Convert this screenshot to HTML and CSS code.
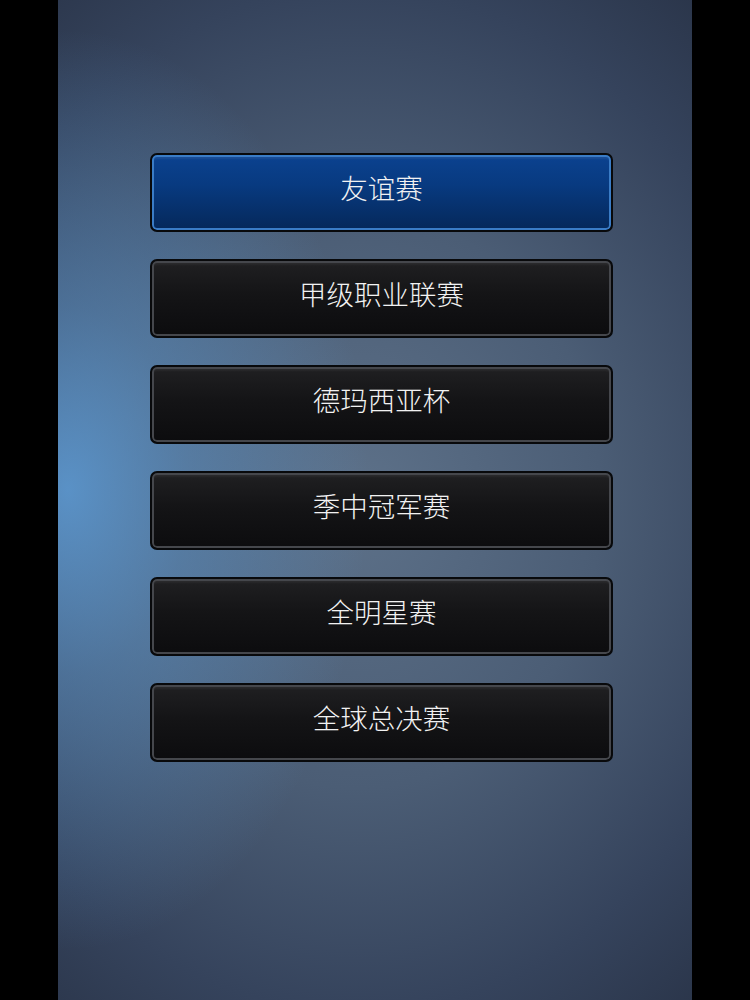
FILE: index.html
```html
<!DOCTYPE html>
<html lang="zh">
<head>
<meta charset="utf-8">
<link rel="stylesheet" href="styles.css">
</head>
<body>
<div class="screen">
  <div class="panel">
    <div class="menu">
      <div class="btn active"><span>友谊赛</span></div>
      <div class="btn"><span>甲级职业联赛</span></div>
      <div class="btn"><span>德玛西亚杯</span></div>
      <div class="btn"><span>季中冠军赛</span></div>
      <div class="btn"><span>全明星赛</span></div>
      <div class="btn"><span>全球总决赛</span></div>
    </div>
  </div>
</div>
</body>
</html>
```
FILE: styles.css
```css
html, body {
  margin: 0;
  padding: 0;
  background: #000;
}
.screen {
  width: 750px;
  height: 1000px;
  background: #000;
  display: flex;
  justify-content: flex-start;
}
.panel {
  margin-left: 58px;
  width: 634px;
  height: 1000px;
  background:
    radial-gradient(ellipse 300px 460px at 10px 490px, rgba(95,160,220,0.8) 0%, rgba(95,160,220,0.4) 40%, rgba(95,160,220,0) 100%),
    radial-gradient(ellipse 540px 640px at 300px 500px, #5d7189 0%, #4b5d75 45%, #35435c 80%, #2b364b 100%);
  box-sizing: border-box;
  padding-top: 153px;
  padding-left: 92px;
}
.menu {
  display: flex;
  flex-direction: column;
  gap: 27px;
  width: 463px;
}
.btn {
  height: 79px;
  box-sizing: border-box;
  border: 2px solid #08090b;
  border-radius: 7px;
  background: linear-gradient(#202022 0%, #141416 45%, #0c0c0e 100%);
  box-shadow: inset 0 0 0 2px #45474c, inset 0 4px 2px rgba(255,255,255,0.05);
  display: flex;
  align-items: center;
  justify-content: center;
  padding-bottom: 9px;
}
.btn.active {
  background: linear-gradient(#0b4290 0%, #083a80 40%, #05285a 100%);
  box-shadow: inset 0 0 0 2px #3a7cc6, inset 0 4px 2px rgba(255,255,255,0.07);
}
.btn span {
  color: #f2f2f2;
  font-family: "Noto Sans CJK SC", "Noto Sans", sans-serif;
  font-size: 27.5px;
  font-weight: 300;
  letter-spacing: 0;
  line-height: 1;
}
```
